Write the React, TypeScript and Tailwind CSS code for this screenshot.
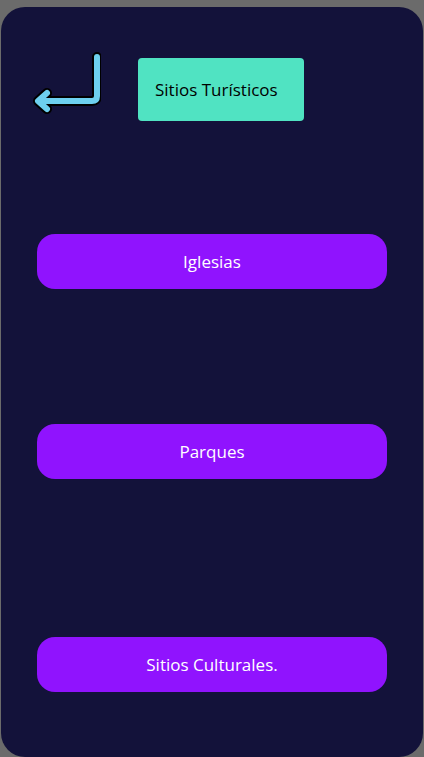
import React from 'react';

const BackArrow: React.FC = () => (
  <svg width="72" height="66" viewBox="28 50 72 66" className="shrink-0">
    <g fill="none" strokeLinecap="round" strokeLinejoin="round">
      <path d="M96 57 V96 Q96 101 91 101 H38 M46 93 L37 101 L46 109" stroke="#000" strokeWidth="10" />
      <path d="M96 57 V96 Q96 101 91 101 H38 M46 93 L37 101 L46 109" stroke="#6dd0ef" strokeWidth="6" />
    </g>
  </svg>
);

const categories = ['Iglesias', 'Parques', 'Sitios Culturales.'];

const App: React.FC = () => {
  return (
    <div
      className="w-[424px] h-[757px] bg-[#6b6b6b] pt-[7px] px-[1px] overflow-hidden"
      style={{ fontFamily: '"Open Sans", "Noto Sans", sans-serif' }}
    >
      <div className="h-[750px] bg-[#13123a] rounded-[24px] flex flex-col px-[36px]">
        {/* Header */}
        <div className="flex items-start mt-[43px] ml-[-8px]">
          <BackArrow />
          <div className="ml-[37px] mt-[8px] w-[166px] h-[63px] bg-[#50e3c2] rounded-[4px] flex items-center pl-[17px] text-[17px] text-black">
            Sitios Turísticos
          </div>
        </div>

        {/* Category buttons */}
        <button className="mt-[113px] h-[55px] w-[350px] rounded-[18px] bg-[#9013fe] text-white text-[17px]">
          {categories[0]}
        </button>
        <button className="mt-[135px] h-[55px] w-[350px] rounded-[18px] bg-[#9013fe] text-white text-[17px]">
          {categories[1]}
        </button>
        <button className="mt-[158px] h-[55px] w-[350px] rounded-[18px] bg-[#9013fe] text-white text-[17px]">
          {categories[2]}
        </button>
      </div>
    </div>
  );
};

export default App;
